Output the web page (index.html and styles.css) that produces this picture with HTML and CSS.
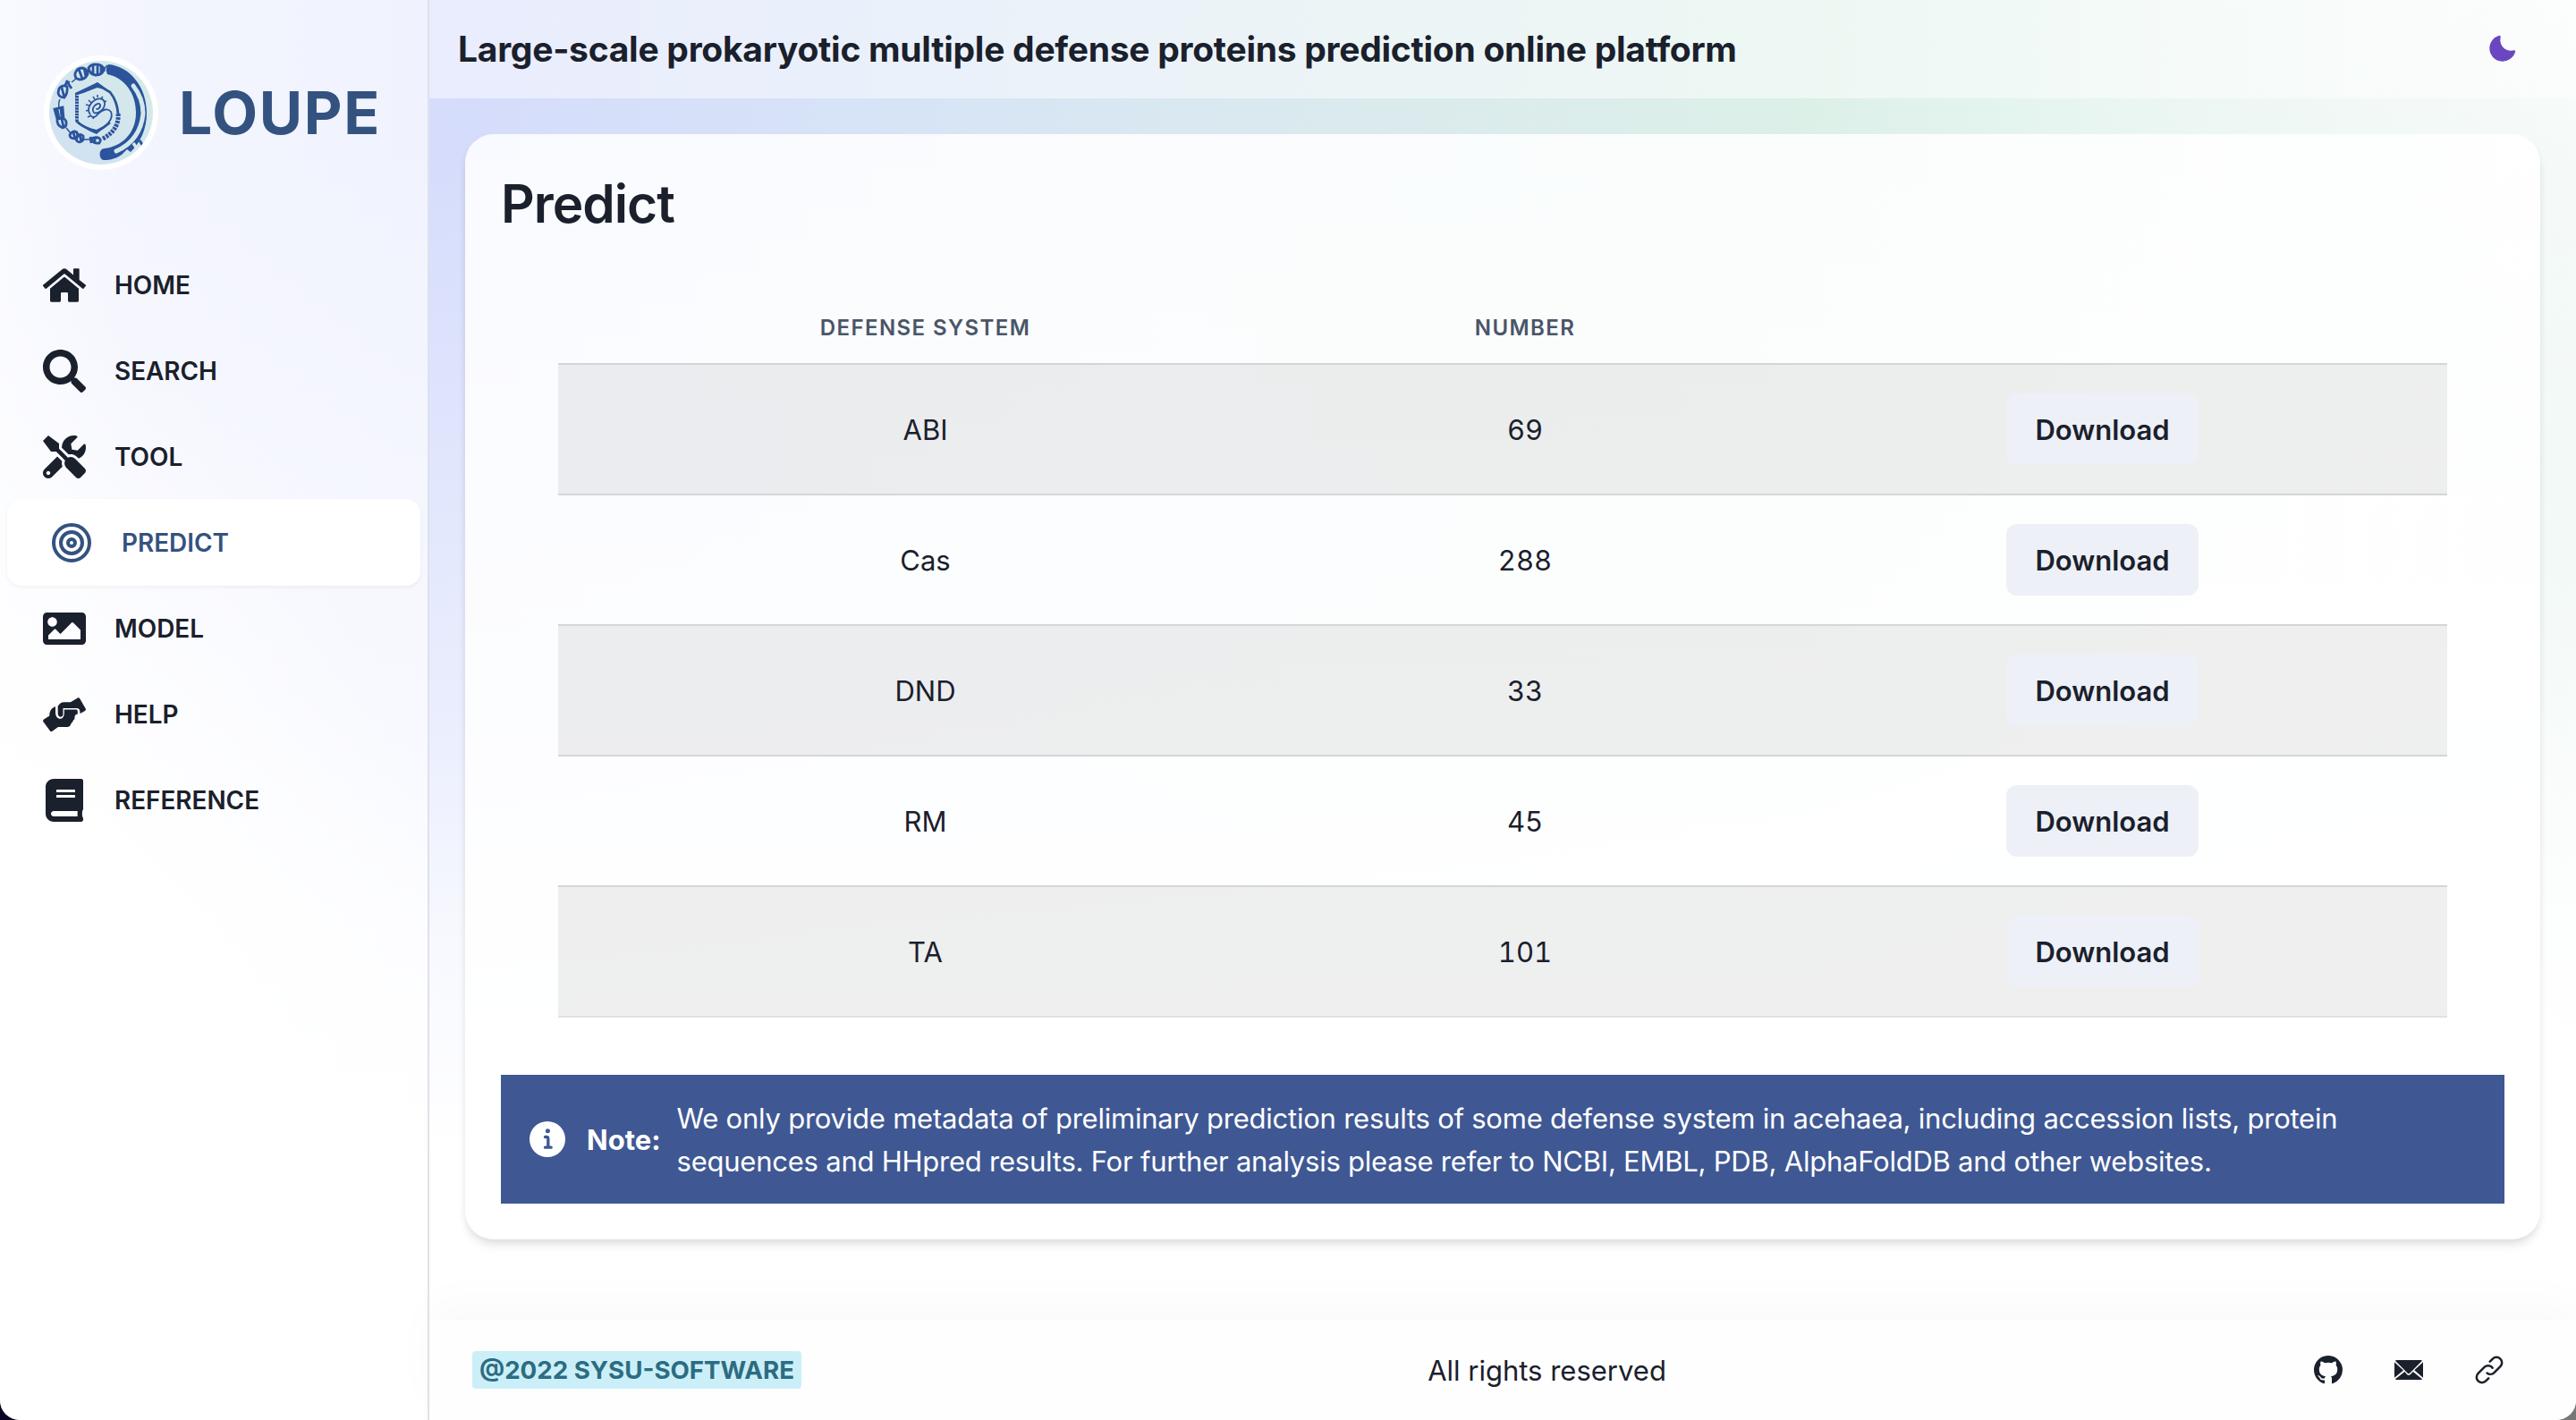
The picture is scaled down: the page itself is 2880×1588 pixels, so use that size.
FILE: index.html
```html
<!DOCTYPE html>
<html lang="en">
<head>
<meta charset="utf-8">
<title>LOUPE - Predict</title>
<link rel="stylesheet" href="styles.css">
</head>
<body>
<div class="app">
  <aside class="sidebar">
    <div class="brand">
      <svg class="logo" viewBox="0 0 128 128">
        <defs>
          <linearGradient id="lg" x1="0" y1="1" x2="1" y2="0"><stop offset=".2" stop-color="#d1e2f1"/><stop offset=".8" stop-color="#d4e9ea"/></linearGradient>
          <clipPath id="disc"><circle cx="64" cy="64" r="58"/></clipPath>
        </defs>
        <circle cx="64" cy="64" r="64" fill="#fff"/>
        <circle cx="64" cy="64" r="58" fill="url(#lg)"/>
        <g clip-path="url(#disc)">
          <path fill="#2b549c" d="M72 10C96 12 115 35 115 64c0 19-7 33-18 44l-4-3-6 6c-6 4-12 6-20 6-6-1-6-13 1-13C86 102 103 88 103 64 103 42 90 25 71 21q-3-6 1-11z"/>
          <path d="M100 34Q111 48 111 65 108 95 81 107" fill="none" stroke="#d4e8eb" stroke-width="5" stroke-linecap="round"/>
          <path d="M100 98l8 12" stroke="#d4e8eb" stroke-width="3.500"/>
          <path d="M107 95l5 8" stroke="#2b549c" stroke-width="3"/>
          <g fill="none" stroke="#2b549c" stroke-width="2.800">
            <path d="M50 14q2-4 8-4 8 0 9 6-2 6-9 6-7-1-8-8zM55 10v12M60 10v12M64 12v9M35 20q2-6 8-6 6 1 6 7-3 6-9 6-6-1-5-7zM39 15l4 11M45 14l2 10"/>
            <path d="M17 37q4-5 9-2 1 7-3 12-6 0-7-5zM20 36l3 11M25 28l6 9M24 35q0-6 5-5M12 60l9-2 1 12-7 1zM15 60l2 10M19 59l1 10M15 71q8-3 10 3 1 6-4 7-7-3-6-10zM20 71l2 9"/>
            <path d="M29 89q3-6 8-3 2 5-2 7-6 0-6-4zM37 92q2-6 7-2 1 6-4 7-5-1-3-5zM33 86l2 7M40 89l2 7M52 91l1 7M53 94q2-3 8-2 4 2 1 6-6 1-9-4zM57 92v6"/>
            <path d="M31 30l5-4M18 49q-2 4-1 10M25 81l5 6M45 94h7M68 18q-1-4 3-7" stroke-width="1.500"/>
            <path d="M37 45v28" stroke-width="4" stroke-dasharray="2.500 .8"/>
            <path d="M66 93q19-10 17-29" stroke-width="5" stroke-dasharray="2.800 1.200"/>
            <path d="M36 43Q52 39 60 32q8 6 14 9 8 10 9 24M36 73q8 8 23 12 8-4 15-10"/>
          </g>
          <path fill="#2b549c" d="M35 45V42L60 30 74 40 60 36zM38 74q9 7 21 9l14-7-14 12Q45 83 38 74z"/>
          <path d="M52 66q-4-5 0-11c6-9 15-8 16-2 1 7-8 13-12 11-4-5 4-13 7-9 1 3-4 7-4 4M52 67q4 5 9-2 9-8 14-2c3 7-2 13-10 19" fill="none" stroke="#2b549c" stroke-width="1.800"/>
          <path d="M47 55l4 1M47 62l4-1M50 50l3 3M55 46l2 3M60 44v3M66 46l-2 2M70 51l-3 1M49 69l4-2M55 71l1-3" stroke="#2b549c" stroke-width="1.500"/>
        </g>
      </svg>
      <span class="brand-name">LOUPE</span>
    </div>
    <nav class="nav">
      <a class="nav-item"><svg class="nav-icon" viewBox="0 0 576 512"><path d="M280.370 148.260L96 300.110V464a16 16 0 0 0 16 16l112.060-.29a16 16 0 0 0 15.920-16V368a16 16 0 0 1 16-16h64a16 16 0 0 1 16 16v95.640a16 16 0 0 0 16 16.050L464 480a16 16 0 0 0 16-16V300L295.670 148.260a12.190 12.190 0 0 0-15.300 0zM571.600 251.470L488 182.560V44.050a12 12 0 0 0-12-12h-56a12 12 0 0 0-12 12v72.610L318.470 43a48 48 0 0 0-61 0L4.340 251.470a12 12 0 0 0-1.600 16.900l25.500 31A12 12 0 0 0 45.150 301l235.220-193.740a12.190 12.190 0 0 1 15.300 0L530.900 301a12 12 0 0 0 16.900-1.600l25.500-31a12 12 0 0 0-1.700-16.930z"/></svg><span>HOME</span></a>
      <a class="nav-item"><svg class="nav-icon" viewBox="0 0 512 512"><path d="M505 442.700L405.300 343c-4.500-4.500-10.600-7-17-7H372c27.600-35.300 44-79.700 44-128C416 93.100 322.900 0 208 0S0 93.100 0 208s93.100 208 208 208c48.300 0 92.700-16.400 128-44v16.300c0 6.400 2.500 12.500 7 17l99.700 99.700c9.400 9.400 24.600 9.400 33.900 0l28.300-28.300c9.400-9.400 9.400-24.600.1-34zM208 336c-70.700 0-128-57.200-128-128 0-70.700 57.200-128 128-128 70.700 0 128 57.200 128 128 0 70.700-57.200 128-128 128z"/></svg><span>SEARCH</span></a>
      <a class="nav-item"><svg class="nav-icon" viewBox="0 0 512 512"><path d="M501.100 395.700L384 278.600c-23.100-23.100-57.600-27.600-85.400-13.900L192 158.100V96L64 0 0 64l96 128h62.100l106.600 106.600c-13.600 27.800-9.200 62.300 13.900 85.400l117.100 117.100c14.600 14.600 38.200 14.600 52.700 0l52.700-52.700c14.500-14.600 14.500-38.200 0-52.700zM331.700 225c28.300 0 54.900 11 74.900 31l19.400 19.400c15.800-6.900 30.800-16.500 43.800-29.500 37.100-37.100 49.700-89.300 37.900-136.700-2.200-9-13.500-12.100-20.100-5.500l-74.400 74.400-67.900-11.300L334 98.900l74.400-74.400c6.600-6.600 3.400-17.900-5.700-20.200-47.400-11.700-99.600.9-136.600 37.900-28.500 28.500-41.900 66.100-41.200 103.600l82.100 82.100c8.100-1.900 16.500-2.900 24.700-2.900zm-103.900 82l-56.700-56.700L18.700 402.800c-25 25-25 65.500 0 90.500s65.500 25 90.500 0l123.600-123.600c-7.600-19.900-9.900-41.600-5-62.700zM64 472c-13.200 0-24-10.800-24-24 0-13.300 10.700-24 24-24s24 10.700 24 24c0 13.200-10.700 24-24 24z"/></svg><span>TOOL</span></a>
      <a class="nav-item active"><svg class="nav-icon" viewBox="0 0 24 24" fill="none" stroke="currentColor" stroke-width="2"><circle cx="12" cy="12" r="10"/><circle cx="12" cy="12" r="6"/><circle cx="12" cy="12" r="2"/></svg><span>PREDICT</span></a>
      <a class="nav-item"><svg class="nav-icon" viewBox="0 0 512 512"><path d="M464 448H48c-26.510 0-48-21.490-48-48V112c0-26.510 21.490-48 48-48h416c26.510 0 48 21.490 48 48v288c0 26.510-21.490 48-48 48zM112 120c-30.928 0-56 25.072-56 56s25.072 56 56 56 56-25.072 56-56-25.072-56-56-56zM64 384h384V272l-87.515-87.515c-4.686-4.686-12.284-4.686-16.971 0L208 320l-55.515-55.515c-4.686-4.686-12.284-4.686-16.971 0L64 336v48z"/></svg><span>MODEL</span></a>
      <a class="nav-item"><svg class="nav-icon" viewBox="0 -5 48 48"><path d="M1 24.500l6.300-4.100c0-6 2.700-8.700 6.700-10.100v6.500c0 8.800 9.800 9.800 9.800.5v-3.800h13.500c1.200 0 1.500 1.200 1.500 3.200v1.700c-2.800.6-3.300 2-3.300 4 0 3-2.200 2.300-2.200 5-2.200 0-1.700 5.500-6.200 5.500H17l-6.600 4.800c-1 .7-2 .5-2.500-.5L.3 27c-.5-1-.2-1.900.7-2.500zM16.700 9.500c2.200-2.900 4-4.300 6.700-4.300h7.400L38.500.7c1.300-.7 2.200-.4 2.900.8L47.700 12.500c.6 1.200.2 2-.8 2.500l-5.300 3.100c-.1-4-.9-6-3.300-6H22.500v6.500c0 4.500-5.800 4-5.800-.5z"/></svg><span>HELP</span></a>
      <a class="nav-item"><svg class="nav-icon" viewBox="0 0 448 512"><path d="M448 360V24c0-13.300-10.700-24-24-24H96C43 0 0 43 0 96v320c0 53 43 96 96 96h328c13.300 0 24-10.700 24-24v-16c0-7.500-3.500-14.300-8.900-18.700-4.200-15.400-4.200-59.300 0-74.700 5.400-4.300 8.900-11.100 8.900-18.600zM128 134c0-3.300 2.700-6 6-6h212c3.300 0 6 2.700 6 6v20c0 3.300-2.700 6-6 6H134c-3.300 0-6-2.700-6-6v-20zm0 64c0-3.300 2.700-6 6-6h212c3.300 0 6 2.700 6 6v20c0 3.300-2.700 6-6 6H134c-3.300 0-6-2.700-6-6v-20zm253.400 250H96c-17.700 0-32-14.300-32-32 0-17.600 14.400-32 32-32h285.400c-1.900 17.100-1.900 46.900 0 64z"/></svg><span>REFERENCE</span></a>
    </nav>
  </aside>
  <div class="page">
    <header class="topbar">
      <h1>Large-scale prokaryotic multiple defense proteins prediction online platform</h1>
      <svg class="moon" viewBox="0 0 24 24"><path fill="currentColor" d="M21.400 13.700C20.600 13.900 19.800 14 19 14c-5 0-9-4-9-9 0-.8.100-1.600.3-2.400.100-.3 0-.7-.3-1-.3-.3-.6-.4-1-.3C4.300 2.700 1 7.100 1 12c0 6.100 4.900 11 11 11 4.900 0 9.300-3.300 10.600-8.100.1-.3 0-.7-.3-1-.2-.2-.6-.3-.9-.2z"/></svg>
    </header>
    <main class="main">
      <section class="card">
        <h2>Predict</h2>
        <table class="table">
          <colgroup><col class="c1"><col class="c2"><col class="c3"></colgroup>
          <thead><tr><th>DEFENSE SYSTEM</th><th>NUMBER</th><th></th></tr></thead>
          <tbody>
            <tr><td>ABI</td><td>69</td><td><button class="btn">Download</button></td></tr>
            <tr><td>Cas</td><td>288</td><td><button class="btn">Download</button></td></tr>
            <tr><td>DND</td><td>33</td><td><button class="btn">Download</button></td></tr>
            <tr><td>RM</td><td>45</td><td><button class="btn">Download</button></td></tr>
            <tr><td>TA</td><td>101</td><td><button class="btn">Download</button></td></tr>
          </tbody>
        </table>
        <div class="note">
          <svg class="info" viewBox="0 0 24 24"><path fill="currentColor" d="M12 0a12 12 0 1 0 12 12A12.013 12.013 0 0 0 12 0zm.25 5a1.500 1.500 0 1 1-1.500 1.500 1.500 1.500 0 0 1 1.500-1.500zm2.250 13.500h-4a1 1 0 0 1 0-2h.75a.25.25 0 0 0 .25-.25v-4.500a.25.25 0 0 0-.25-.25h-.75a1 1 0 0 1 0-2h1a2 2 0 0 1 2 2v4.750a.25.25 0 0 0 .25.25h.75a1 1 0 1 1 0 2z"/></svg>
          <strong>Note:</strong>
          <p>We only provide metadata of preliminary prediction results of some defense system in acehaea, including accession lists, protein<br>sequences and HHpred results. For further analysis please refer to NCBI, EMBL, PDB, AlphaFoldDB and other websites.</p>
        </div>
      </section>
    </main>
    <footer class="footer">
      <span class="badge">@2022 SYSU-SOFTWARE</span>
      <span class="rights">All rights reserved</span>
      <div class="links">
        <svg viewBox="0 0 16 16"><path d="M8 0C3.580 0 0 3.580 0 8c0 3.540 2.290 6.530 5.470 7.590.4.070.55-.17.55-.38 0-.19-.01-.82-.01-1.490-2.010.37-2.530-.49-2.690-.94-.09-.23-.48-.94-.82-1.130-.28-.15-.68-.52-.01-.53.63-.01 1.080.58 1.230.82.72 1.210 1.870.87 2.330.66.070-.52.28-.87.51-1.070-1.780-.2-3.640-.89-3.640-3.950 0-.87.31-1.590.82-2.150-.08-.2-.36-1.020.08-2.120 0 0 .67-.21 2.200.82.64-.18 1.320-.27 2-.27s1.360.09 2 .27c1.530-1.040 2.200-.82 2.200-.82.44 1.100.16 1.920.08 2.120.51.56.82 1.270.82 2.150 0 3.070-1.870 3.750-3.650 3.950.29.25.54.73.54 1.480 0 1.070-.01 1.930-.01 2.200 0 .21.15.46.55.38A8.010 8.010 0 0 0 16 8c0-4.420-3.580-8-8-8z"/></svg>
        <svg viewBox="0 0 24 24"><path d="M11.100 14.800l.9.400 1-.5L23.200 4.300 22.500 3.800H1.500l-.8.500zM0 5.500v13l7.500-6.200zM24 5.500v13l-7.300-6.300zM8.600 13.500L.7 19.700q.4.500 1.100.5h20.400q.7 0 1.100-.5l-7.700-6.200-2.200 2.200q-1.400 1.300-2.900 0z"/></svg>
        <svg viewBox="0 0 24 24" fill="none" stroke="currentColor" stroke-width="1.900" stroke-linecap="round"><path d="M12.600 5l2.300-2.300a4.500 4.500 0 0 1 6.400 6.400l-5.200 5.200a4.500 4.500 0 0 1-5.900.3M11.400 19l-2.300 2.300a4.500 4.500 0 0 1-6.400-6.400l5.200-5.200a4.500 4.500 0 0 1 6.400 0l.4.600"/></svg>
      </div>
    </footer>
  </div>
</div>
</body>
</html>
```
FILE: styles.css
```css
* { box-sizing: border-box; margin: 0; padding: 0; }
html { background: linear-gradient(90deg, #0c0425 50%, #777 50%); }
body { font-family: Inter, "Liberation Sans", sans-serif; color: #1a202c; font-size: 31px; }
.app {
  display: flex; height: 1588px; overflow: hidden;
  border-radius: 0 0 22px 22px;
  background:
    radial-gradient(ellipse 560px 1250px at 0 1588px, #fff 50%, rgba(255,255,255,0) 100%),
    linear-gradient(180deg, rgba(255,255,255,0) 160px, rgba(255,255,255,.22) 430px, rgba(255,255,255,.5) 800px, rgba(255,255,255,.8) 1030px, #fff 1290px),
    radial-gradient(ellipse 700px 800px at 2880px 620px, rgba(229,243,238,.75), rgba(229,243,238,0)),
    linear-gradient(90deg, #eef0ff 0, #dfe3fd 5%, #d5dcfc 17%, #d7e4f6 35%, #dbeaee 52%, #dcf0e8 70%, #e4f4ee 78%, #f3f9f6 90%, #fefefe 100%);
}
.sidebar { width: 480px; border-right: 2px solid #dfe1ea; background: rgba(255,255,255,.64); }
.brand { display: flex; align-items: center; gap: 23px; height: 252px; padding-left: 49px; }
.logo { width: 128px; height: 128px; }
.brand-name { font-size: 66px; font-weight: 700; letter-spacing: 1.700px; color: #34527f; }
.nav { display: flex; flex-direction: column; padding: 19px 8px 0; }
.nav-item { display: flex; align-items: center; gap: 32px; height: 96px; padding-left: 40px; font-size: 27.900px; font-weight: 600; }
.nav-icon { width: 48px; height: 48px; fill: currentColor; }
.nav-item.active { color: #34527f; background: #fff; border-radius: 16px; margin-top: -1px; height: 97px; padding-left: 48px; box-shadow: 0 2px 4px rgba(0,0,0,.05); }
.active .nav-icon { fill: none; }
.page { flex: 1; display: flex; flex-direction: column; min-width: 0; }
.topbar { display: flex; align-items: center; justify-content: space-between; height: 110px; padding: 0 66px 2px 32px; background: rgba(255,255,255,.48); }
.topbar h1 { font-size: 39px; font-weight: 700; letter-spacing: -.27px; }
.moon { width: 32px; height: 32px; color: #6b46c1; }
.main { flex: 1; padding: 40px; }
.card { height: 1236px; padding: 40px; border-radius: 32px; background: rgba(255,255,255,.86); box-shadow: 0 8px 12px -2px rgba(0,0,0,.1), 0 4px 8px -2px rgba(0,0,0,.06); }
.card h2 { font-size: 58.500px; line-height: 76px; font-weight: 600; letter-spacing: -1px; }
.table { width: 2112px; margin: 66px auto 0; table-layout: fixed; border-collapse: separate; border-spacing: 0; }
.c1 { width: 821px; } .c2 { width: 520px; }
th { height: 76px; padding-bottom: 6px; font-size: 24px; font-weight: 600; letter-spacing: 1.400px; color: #4a5568; }
th, td { text-align: center; vertical-align: middle; border-bottom: 2px solid #d4d5d7; }
td { height: 146px; font-variant-numeric: tabular-nums; }
tbody tr:last-child td { border-bottom-color: #dfe0e0; }
tbody tr:nth-child(odd) td { background: rgba(0,0,0,.063); }
.btn { width: 215px; height: 80px; border: 0; border-radius: 12px; background: #edf0f7; color: inherit; font: 600 31px Inter, sans-serif; }
.note { display: flex; align-items: center; height: 144px; margin-top: 64px; padding-left: 32px; background: #3f5893; color: #fff; }
.info { width: 40px; height: 40px; margin-right: 24px; }
.note strong { font-weight: 700; margin-right: 18px; }
.note p { padding-top: 2px; line-height: 48px; white-space: nowrap; letter-spacing: -.23px; }
.footer { display: flex; justify-content: space-between; align-items: center; height: 112px; padding: 0 81px 0 48px; background: #fefefe; box-shadow: 0 -20px 50px rgba(0,0,0,.025); }
.badge { padding: 0 8px; line-height: 42px; font-size: 27.700px; font-weight: 700; color: #2c6c82; background: #cbeff8; border-radius: 4px; }
.links { display: flex; gap: 58px; padding-left: 24px; }
.links svg { width: 32px; height: 32px; fill: #1a202c; }
.links svg:last-child { fill: none; }
```
